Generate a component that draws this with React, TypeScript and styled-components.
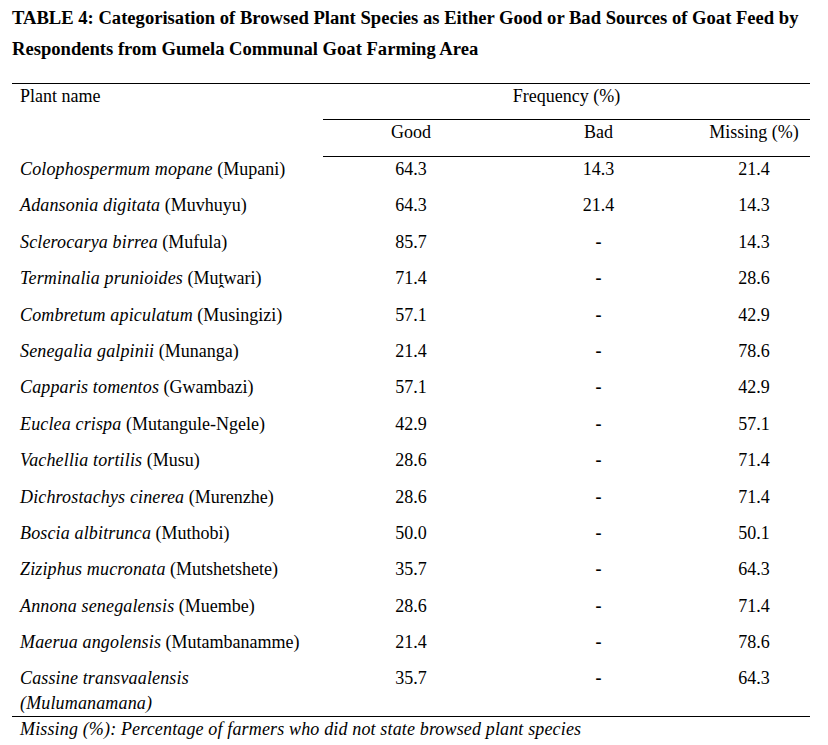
import React from "react";
import styled, { createGlobalStyle } from "styled-components";

const Global = createGlobalStyle`
  html, body { margin: 0; padding: 0; background: #fff; }
  body { font-family: "Liberation Serif", "Times New Roman", serif; color: #000; }
`;

const Page = styled.div`
  width: 828px;
  padding: 2px 18px 0 12px;
  box-sizing: border-box;
`;

const Title = styled.h1`
  margin: 0 0 19px;
  font-size: 18.6px;
  line-height: 31px;
  font-weight: bold;
  white-space: nowrap;
`;

const Table = styled.table`
  width: 798px;
  border-collapse: collapse;
  table-layout: fixed;
  font-size: 18px;
  line-height: 25px;
`;

const HeadCell = styled.th<{ $align?: string; $line?: boolean; $h: number }>`
  font-weight: normal;
  text-align: ${(p) => p.$align || "center"};
  vertical-align: top;
  padding: 0 0 0 ${(p) => (p.$align === "left" ? "8px" : "0")};
  height: ${(p) => p.$h}px;
  box-sizing: border-box;
  border-bottom: ${(p) => (p.$line ? "1px solid #000" : "none")};
`;

const HeadRow = styled.tr<{ $top?: boolean }>`
  border-top: ${(p) => (p.$top ? "1px solid #000" : "none")};
`;

const Row = styled.tr<{ $last?: boolean }>`
  border-bottom: ${(p) => (p.$last ? "1px solid #000" : "none")};
`;

const Cell = styled.td<{ $first?: boolean; $last?: boolean }>`
  padding: 0 0 ${(p) => (p.$last ? "0" : "11.4px")} ${(p) => (p.$first ? "8px" : "0")};
  text-align: ${(p) => (p.$first ? "left" : "center")};
  vertical-align: top;
`;

const Sci = styled.i`
  letter-spacing: 0.15px;
`;

const Dash = styled.span`
  font-weight: bold;
`;

const Footnote = styled.div`
  font-size: 18px;
  line-height: 24px;
  font-style: italic;
  letter-spacing: 0.15px;
  padding-left: 8px;
`;

type R = { sci: string; local: string; good: string; bad: string; missing: string; italicLocal?: boolean };

const rows: R[] = [
  { sci: "Colophospermum mopane", local: "(Mupani)", good: "64.3", bad: "14.3", missing: "21.4" },
  { sci: "Adansonia digitata", local: "(Muvhuyu)", good: "64.3", bad: "21.4", missing: "14.3" },
  { sci: "Sclerocarya birrea", local: "(Mufula)", good: "85.7", bad: "-", missing: "14.3" },
  { sci: "Terminalia prunioides", local: "(Muṱwari)", good: "71.4", bad: "-", missing: "28.6" },
  { sci: "Combretum apiculatum", local: "(Musingizi)", good: "57.1", bad: "-", missing: "42.9" },
  { sci: "Senegalia galpinii", local: "(Munanga)", good: "21.4", bad: "-", missing: "78.6" },
  { sci: "Capparis tomentos", local: "(Gwambazi)", good: "57.1", bad: "-", missing: "42.9" },
  { sci: "Euclea crispa", local: "(Mutangule-Ngele)", good: "42.9", bad: "-", missing: "57.1" },
  { sci: "Vachellia tortilis", local: "(Musu)", good: "28.6", bad: "-", missing: "71.4" },
  { sci: "Dichrostachys cinerea", local: "(Murenzhe)", good: "28.6", bad: "-", missing: "71.4" },
  { sci: "Boscia albitrunca", local: "(Muthobi)", good: "50.0", bad: "-", missing: "50.1" },
  { sci: "Ziziphus mucronata", local: "(Mutshetshete)", good: "35.7", bad: "-", missing: "64.3" },
  { sci: "Annona senegalensis", local: "(Muembe)", good: "28.6", bad: "-", missing: "71.4" },
  { sci: "Maerua angolensis", local: "(Mutambanamme)", good: "21.4", bad: "-", missing: "78.6" },
  { sci: "Cassine transvaalensis", local: "(Mulumanamana)", good: "35.7", bad: "-", missing: "64.3", italicLocal: true },
];

const val = (v: string) => (v === "-" ? <Dash>-</Dash> : v);

export default function App() {
  return (
    <>
      <Global />
      <Page>
        <Title>
          TABLE 4: Categorisation of Browsed Plant Species as Either Good or Bad Sources of Goat Feed by
          <br />
          Respondents from Gumela Communal Goat Farming Area
        </Title>
        <Table>
          <colgroup>
            <col style={{ width: 311 }} />
            <col style={{ width: 176 }} />
            <col style={{ width: 199 }} />
            <col style={{ width: 112 }} />
          </colgroup>
          <thead>
            <HeadRow $top>
              <HeadCell $align="left" rowSpan={2} $h={73}>
                Plant name
              </HeadCell>
              <HeadCell colSpan={3} $line $h={36}>
                Frequency (%)
              </HeadCell>
            </HeadRow>
            <HeadRow>
              <HeadCell $line $h={37}>Good</HeadCell>
              <HeadCell $line $h={37}>Bad</HeadCell>
              <HeadCell $line $h={37}>Missing (%)</HeadCell>
            </HeadRow>
          </thead>
          <tbody>
            {rows.map((r, i) => {
              const last = i === rows.length - 1;
              return (
                <Row key={r.sci} $last={last}>
                  <Cell $first $last={last}>
                    <Sci>{r.sci}</Sci>
                    {last ? <br /> : " "}
                    {r.italicLocal ? <Sci>{r.local}</Sci> : r.local}
                  </Cell>
                  <Cell $last={last}>{val(r.good)}</Cell>
                  <Cell $last={last}>{val(r.bad)}</Cell>
                  <Cell $last={last}>{val(r.missing)}</Cell>
                </Row>
              );
            })}
          </tbody>
        </Table>
        <Footnote>Missing (%): Percentage of farmers who did not state browsed plant species</Footnote>
      </Page>
    </>
  );
}
